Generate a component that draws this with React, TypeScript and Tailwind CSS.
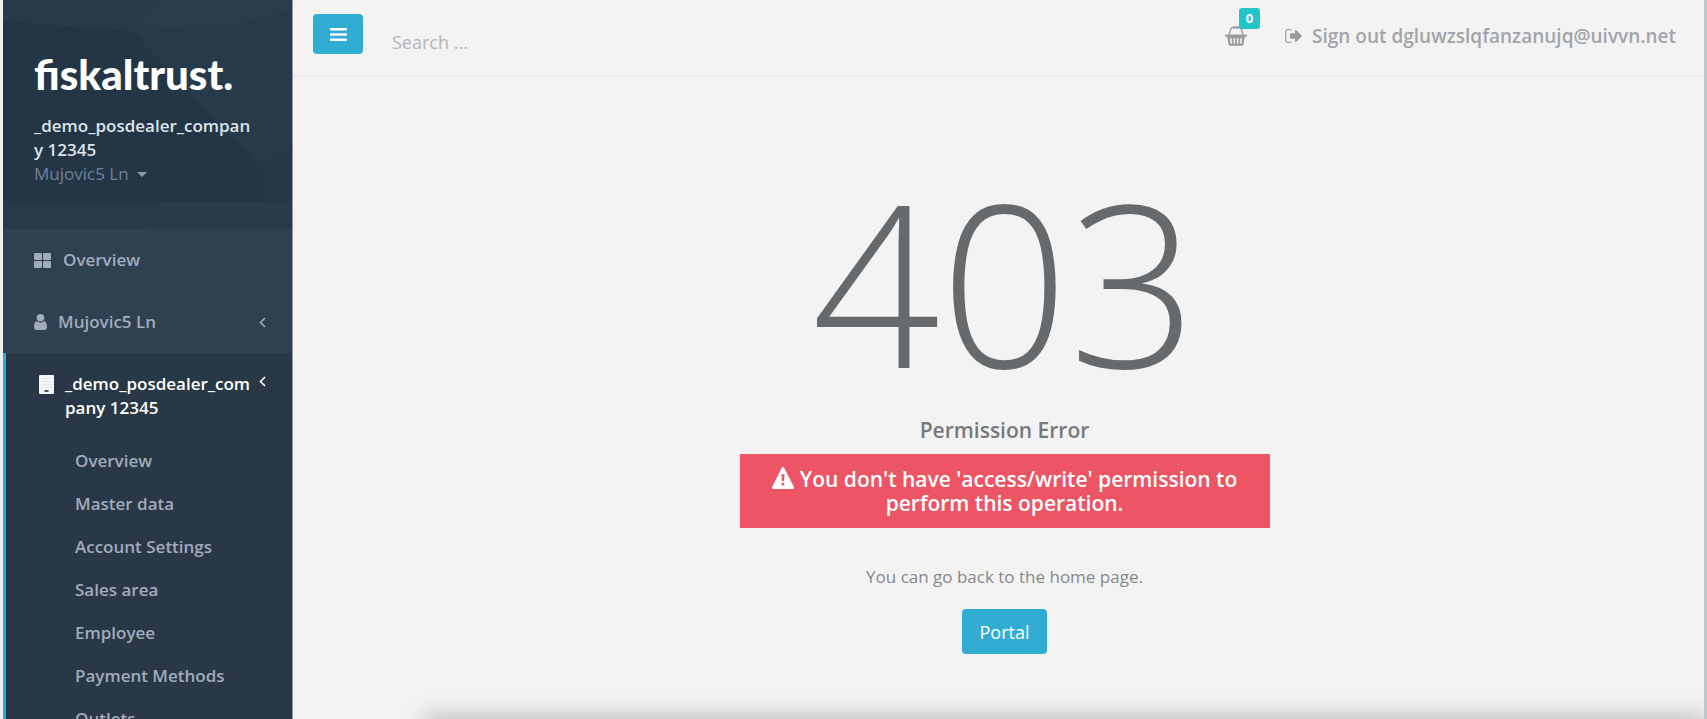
import React from "react";

const subItems = [
  "Overview",
  "Master data",
  "Account Settings",
  "Sales area",
  "Employee",
  "Payment Methods",
  "Outlets",
];

function FacetPattern() {
  return (
    <svg
      className="absolute inset-0 h-full w-full"
      viewBox="0 0 289 230"
      preserveAspectRatio="none"
      aria-hidden="true"
    >
      <rect width="289" height="230" fill="#253747" />
      <polygon points="0,0 158,0 130,32 0,21" fill="#283a49" />
      <polygon points="158,0 289,0 289,10 240,24 130,32" fill="#293c4b" />
      <polygon points="130,32 240,24 289,10 289,145 260,172" fill="#273a49" />
      <polygon points="0,21 130,32 180,90 260,172 260,203 0,203" fill="#243646" />
      <polygon points="0,21 130,32 50,52 0,52" fill="#233545" />
      <polygon points="260,172 289,145 289,203 260,203" fill="#253747" />
      <polygon points="0,203 158,203 140,230 0,230" fill="#273a49" />
      <polygon points="158,203 289,203 289,230 140,230" fill="#293b4a" />
    </svg>
  );
}

function GridIcon() {
  return (
    <svg className="h-[15px] w-[17px] shrink-0" viewBox="0 0 17 15" fill="currentColor" aria-hidden="true">
      <rect x="0" y="0" width="8" height="7" rx="1.2" />
      <rect x="9" y="0" width="8" height="7" rx="1.2" />
      <rect x="0" y="8" width="8" height="7" rx="1.2" />
      <rect x="9" y="8" width="8" height="7" rx="1.2" />
    </svg>
  );
}

function UserIcon() {
  return (
    <svg className="h-4 w-[13px] shrink-0" viewBox="0 0 13 16" fill="currentColor" aria-hidden="true">
      <circle cx="6.5" cy="3.8" r="3.8" />
      <path d="M2.800 7C.900 7.500 0 9.800 0 13 0 14.800 1.100 16 2.600 16h7.800c1.500 0 2.600-1.200 2.600-3 0-3.200-.900-5.500-2.800-6a4.900 4.900 0 0 1-7.400 0z" />
    </svg>
  );
}

function BuildingIcon() {
  return (
    <svg className="h-[19px] w-[15px] shrink-0" viewBox="0 0 15 19" aria-hidden="true">
      <rect width="15" height="19" rx="1" fill="#f4f5f6" />
      <path
        d="M3 3.500h9M3 6.500h9M3 9.500h9M3 12.500h9"
        stroke="#dbdfe2"
        strokeWidth="1.200"
        strokeDasharray="1.500 1"
      />
      <rect x="5.500" y="15" width="4" height="2" fill="#4a5662" />
    </svg>
  );
}

function ChevronIcon() {
  return (
    <svg
      className="h-[11px] w-[7px] shrink-0"
      viewBox="0 0 7 11"
      fill="none"
      stroke="currentColor"
      strokeWidth="1.600"
      aria-hidden="true"
    >
      <path d="M6 1 1.500 5.500 6 10" />
    </svg>
  );
}

function BarsIcon() {
  return (
    <svg className="h-[15px] w-[17px]" viewBox="0 0 17 15" fill="currentColor" aria-hidden="true">
      <rect y="1" width="17" height="2.600" rx="0.800" />
      <rect y="6.200" width="17" height="2.600" rx="0.800" />
      <rect y="11.400" width="17" height="2.600" rx="0.800" />
    </svg>
  );
}

function BasketIcon() {
  return (
    <svg className="h-5 w-[22px]" viewBox="0 0 22 20" aria-hidden="true">
      <path
        d="M4 9 5.800 3C6.100 2 6.700 1.500 7.700 1.500h6.600c1 0 1.600.500 1.900 1.500L18 9"
        fill="none"
        stroke="currentColor"
        strokeWidth="1.300"
      />
      <rect x="7.500" y="0.500" width="7" height="2" rx="0.800" fill="currentColor" />
      <rect x="0" y="8.500" width="22" height="2.400" rx="1.200" fill="currentColor" />
      <path
        fillRule="evenodd"
        fill="currentColor"
        d="M2 10h18l-1.600 8.600c-.100.700-.700 1.200-1.400 1.200H5c-.700 0-1.300-.500-1.400-1.200zM5 12.300l.500 5.200h1.600l-.400-5.200zM8.500 12.300v5.200h1.600v-5.200zM11.900 12.300v5.200h1.600v-5.200zM15.300 12.300l-.400 5.200h1.600l.500-5.200z"
      />
    </svg>
  );
}

function SignOutIcon() {
  return (
    <svg className="h-[14px] w-[17px] shrink-0" viewBox="0 0 17 14" aria-hidden="true">
      <path
        d="M6.500.700H3A2.300 2.300 0 0 0 .700 3v8A2.300 2.300 0 0 0 3 13.300h3.500"
        fill="none"
        stroke="currentColor"
        strokeWidth="1.300"
      />
      <path
        d="M10 1.600c0-.700.700-.900 1.100-.500l5.500 5.400c.300.300.300.700 0 1l-5.500 5.400c-.400.400-1.100.200-1.100-.500V9.700H5.600c-.400 0-.700-.300-.700-.700V5c0-.400.300-.700.700-.700H10z"
        fill="#999c9e"
      />
    </svg>
  );
}

function WarningIcon() {
  return (
    <svg className="mr-1.5 inline-block h-[22px] w-[22px] align-[-2px]" viewBox="0 0 22 20" preserveAspectRatio="none" aria-hidden="true">
      <path
        fillRule="evenodd"
        fill="currentColor"
        d="M9.700.800c.600-1 2-1 2.600 0l9.400 17c.600 1-.100 2.200-1.300 2.200H1.600C.400 20-.300 18.800.300 17.800zM9.500 6.500l.400 6.200h2.200l.400-6.200zM9.700 14.300v2.500h2.600v-2.500z"
      />
    </svg>
  );
}

function Sidebar() {
  return (
    <aside className="w-[290px] shrink-0 overflow-hidden border-r border-[#8b95a0] bg-[#2f4050] text-[17px] leading-6 font-semibold text-[#a0abbd]">
      <div className="relative h-[229px]">
        <FacetPattern />
        <div className="relative pt-[50px] pr-9 pl-[31px]">
          <div className="font-['Lato',sans-serif] text-[42px] leading-[48px] font-black text-white">
            fiskaltrust.
          </div>
          <p className="mt-4 break-all text-[#dde4eb]">_demo_posdealer_company 12345</p>
          <button type="button" className="flex items-center gap-2 font-normal text-[#6f8196]">
            Mujovic5 Ln
            <svg className="h-[5px] w-[10px]" viewBox="0 0 10 5" fill="#8b9bad" aria-hidden="true">
              <path d="M0 0h10L5 5z" />
            </svg>
          </button>
        </div>
      </div>
      <nav>
        <a href="#overview" className="flex items-center gap-3 py-[19px] pr-[26px] pl-[31px]">
          <GridIcon />
          Overview
        </a>
        <a href="#user" className="flex items-center gap-[11px] py-[19px] pr-[26px] pl-[31px]">
          <UserIcon />
          <span className="flex-1">Mujovic5 Ln</span>
          <ChevronIcon />
        </a>
        <div className="border-l-[3px] border-[#2fabd2] bg-[#293846]">
          <a href="#company" className="flex items-start gap-[11px] py-[19px] pr-[26px] pl-[33px] text-white">
            <span className="pt-[3px]">
              <BuildingIcon />
            </span>
            <span className="-mr-1.5 flex-1 break-all">_demo_posdealer_company 12345</span>
            <span className="pt-1">
              <ChevronIcon />
            </span>
          </a>
          <ul>
            {subItems.map((item) => (
              <li key={item}>
                <a href="#company" className="flex h-[43px] items-center pl-[69px]">
                  {item}
                </a>
              </li>
            ))}
          </ul>
        </div>
      </nav>
    </aside>
  );
}

function TopBar() {
  return (
    <header className="flex h-[77px] items-start border-b-2 border-[#e9ebee] pr-7 pl-5">
      <button
        type="button"
        aria-label="Toggle navigation"
        className="mt-[14px] flex h-10 w-[50px] items-center justify-center rounded bg-[#32add2] text-white"
      >
        <BarsIcon />
      </button>
      <input
        type="search"
        aria-label="Search"
        placeholder="Search ..."
        className="mt-[14px] ml-[29px] h-14 min-w-0 flex-1 bg-transparent text-lg outline-none placeholder:text-[#b4b5b6]"
      />
      <a href="#cart" aria-label="Cart" className="relative mt-[26px] text-[#999c9e]">
        <BasketIcon />
        <span className="absolute -top-[18px] left-[14px] flex h-[21px] w-[21px] items-center justify-center rounded-[3px] bg-[#23c6c8] text-[13px] font-bold text-white">
          0
        </span>
      </a>
      <a
        href="#signout"
        className="mt-6 ml-[38px] flex items-center gap-[10px] text-[19px] leading-6 font-semibold text-[#a2a5a8]"
      >
        <SignOutIcon />
        Sign out dgluwzslqfanzanujq@uivvn.net
      </a>
    </header>
  );
}

export default function App() {
  return (
    <div className="relative flex h-screen overflow-hidden border-r-[3px] border-l-[3px] border-r-[#b4cccf] border-l-[#eef0f1] bg-[#f3f3f4] font-['Open_Sans',sans-serif]">
      <Sidebar />
      <div className="min-w-0 flex-1">
        <TopBar />
        <div className="pl-3">
          <main className="mx-auto flex w-[530px] flex-col items-center pt-[89px] text-center text-[#76797c]">
            <h1 className="text-[225px] leading-[230px] font-light text-[#676a6c]">403</h1>
            <h3 className="mt-[22px] text-[21px] leading-6 font-semibold">Permission Error</h3>
            <div
              role="alert"
              className="mt-3 w-full bg-[#ed5565] px-5 py-[13px] text-[21px] leading-6 font-semibold text-white"
            >
              <WarningIcon />
              You don't have 'access/write' permission to perform this operation.
            </div>
            <p className="mt-[37px] text-[17px] leading-6 text-[#85888a]">You can go back to the home page.</p>
            <a
              href="#portal"
              className="mt-5 flex h-[45px] items-center rounded bg-[#32add2] px-[18px] text-lg text-white"
            >
              Portal
            </a>
          </main>
        </div>
      </div>
      <div className="pointer-events-none absolute right-0 -bottom-5 left-[424px] h-5 shadow-[0_0_22px_3px_rgba(0,0,0,0.24)]" />
    </div>
  );
}
